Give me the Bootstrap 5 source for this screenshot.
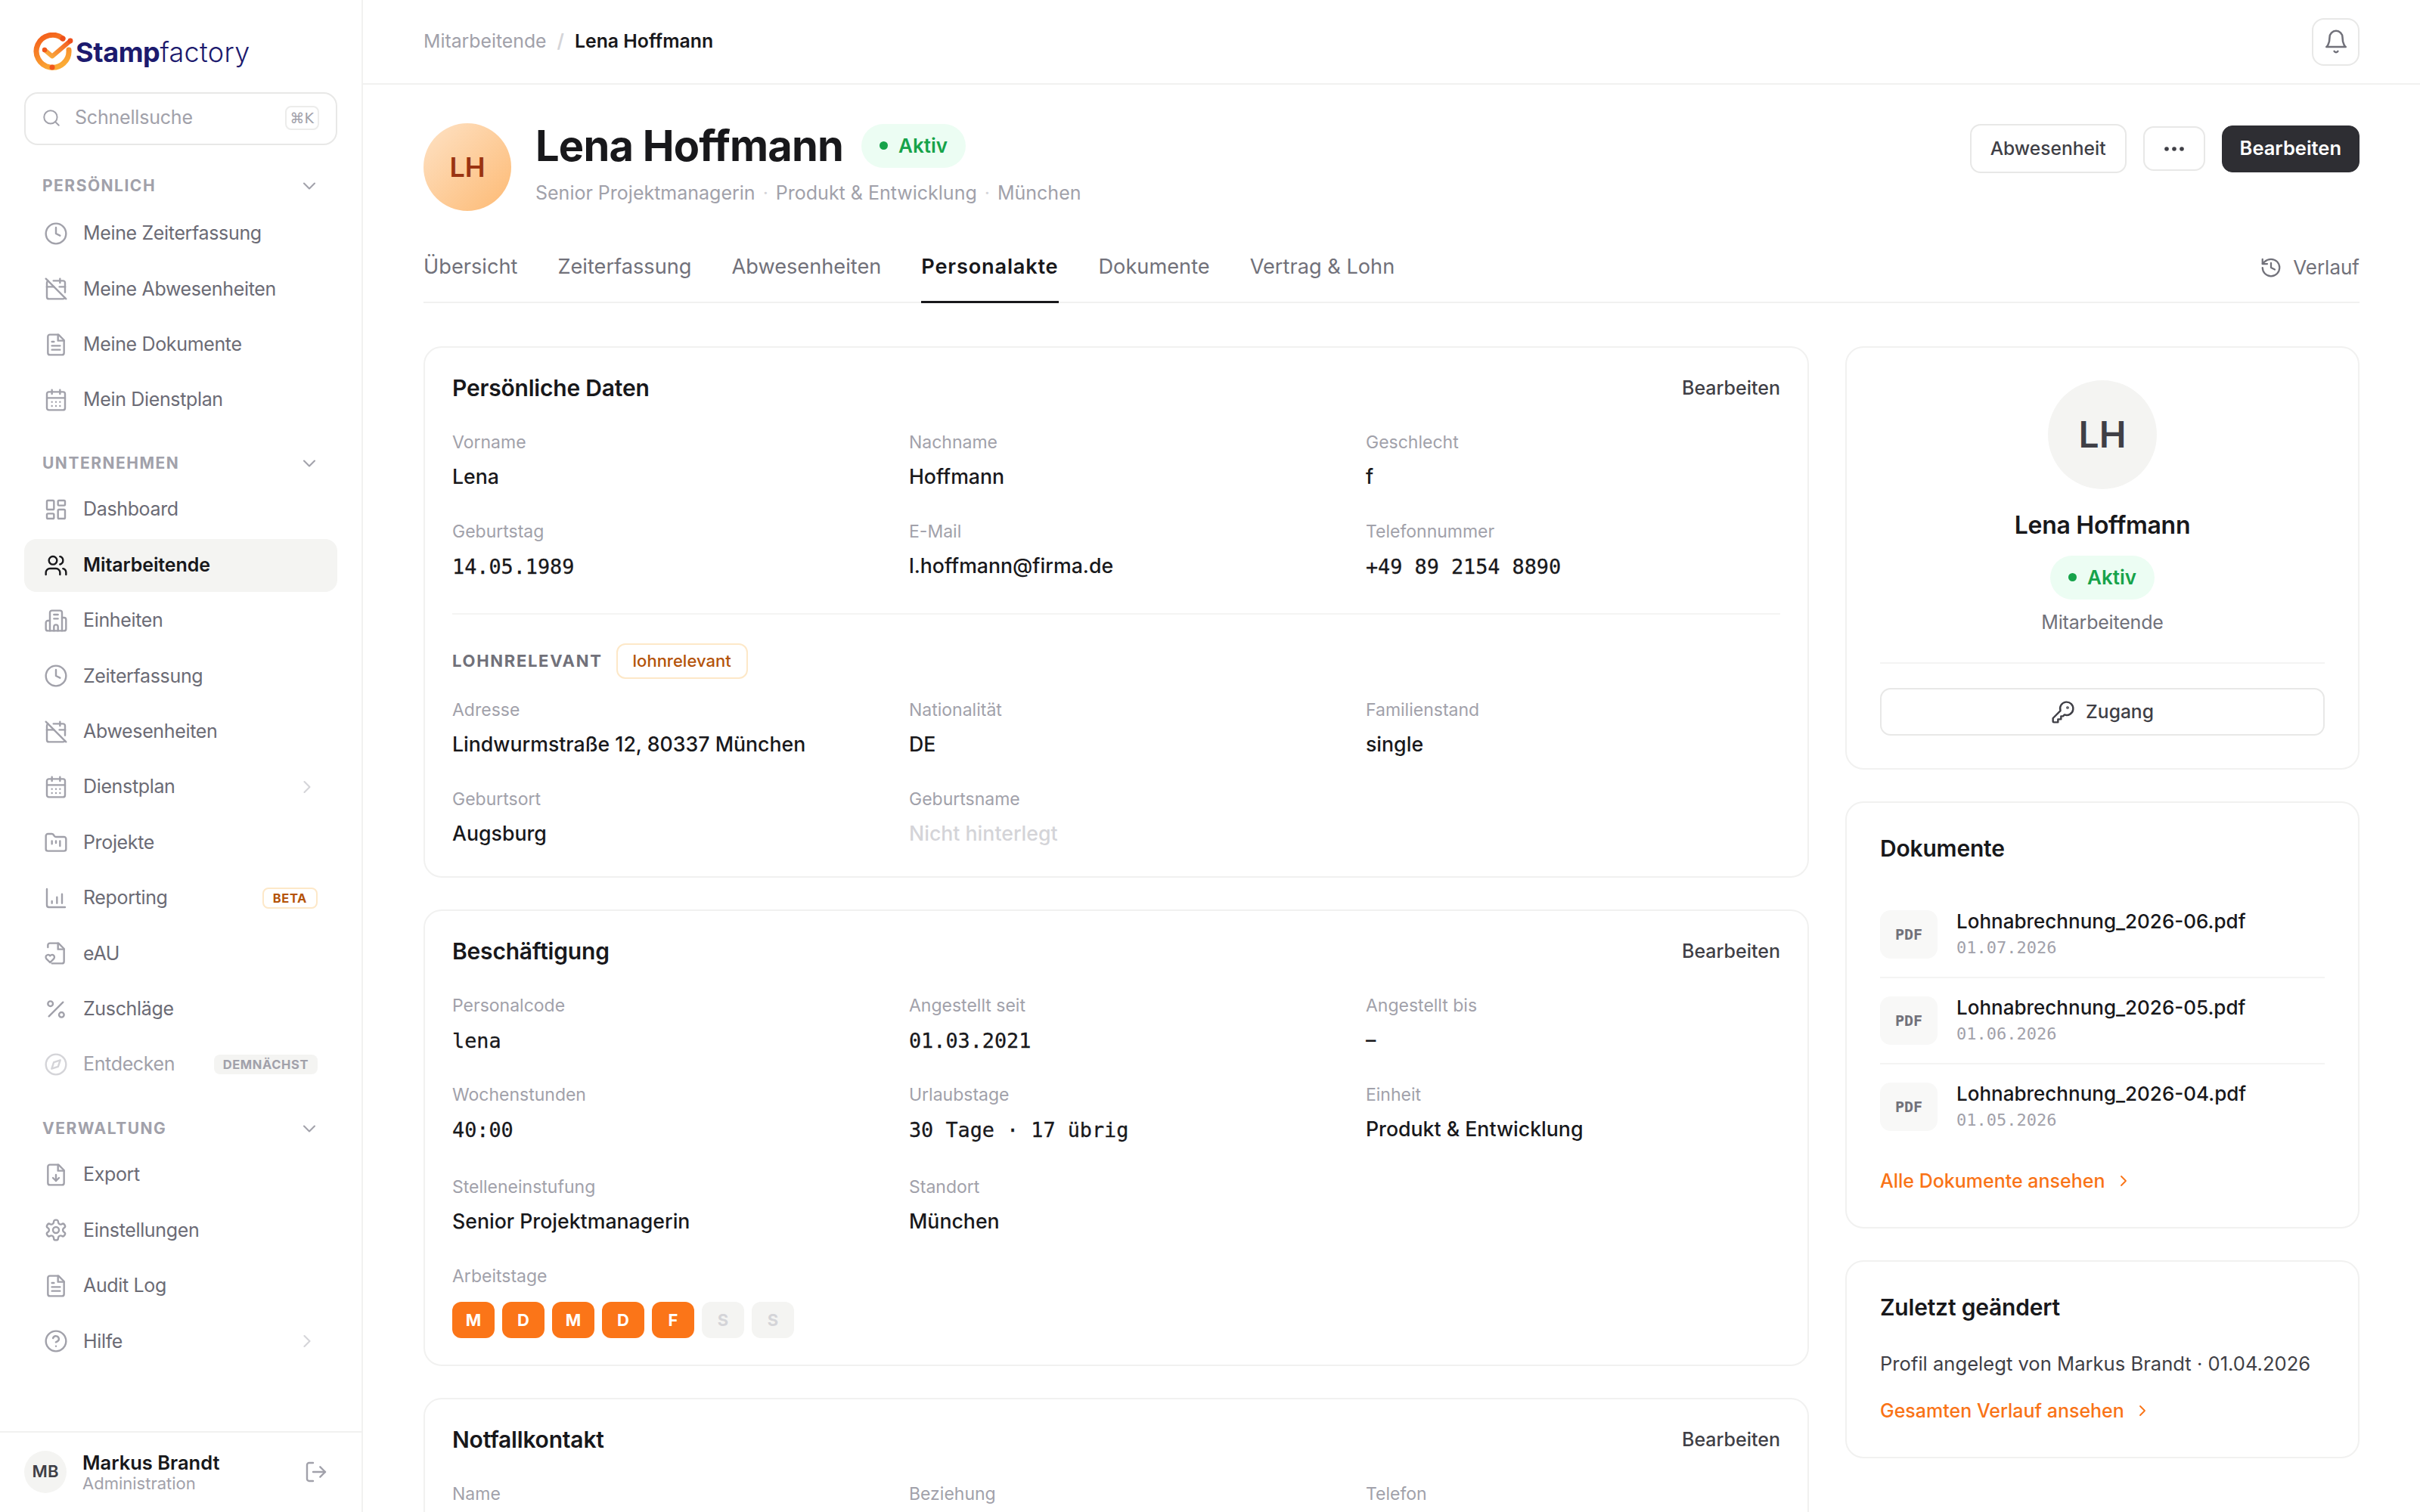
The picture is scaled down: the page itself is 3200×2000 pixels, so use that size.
<!DOCTYPE html>
<html lang="de">
<head>
    <meta charset="UTF-8">
    <meta name="viewport" content="width=device-width, initial-scale=1.0">
    <title>Lena Hoffmann - Personalakte</title>
    <link href="https://cdn.jsdelivr.net/npm/bootstrap@5.3.0/dist/css/bootstrap.min.css" rel="stylesheet">
    <style>
        html, body { height: 100%; }
        body {
            background: #fff;
            color: #18181b;
            font-family: Inter, "Liberation Sans", sans-serif;
            font-size: 26px;
            overflow: hidden;
        }
        .ico { fill: none; stroke: currentColor; stroke-width: 1.8; stroke-linecap: round; stroke-linejoin: round; flex-shrink: 0; }
        .shell { height: 2000px; }

        /* sidebar */
        .side-panel { width: 480px; flex-shrink: 0; border-right: 2px solid #f1f1f0; }
        .side-scroll { padding: 44px 32px 0; }
        .brand-row { height: 50px; margin: 0 0 28px 12px; gap: 2px; }
        .brand-name { font-size: 36px; line-height: 50px; color: #1c1a6e; font-weight: 300; letter-spacing: .3px; }
        .brand-name b { font-weight: 700; letter-spacing: -.4px; }
        .quick-search { height: 70px; border: 2px solid #e8e8e7; border-radius: 18px; padding: 0 22px 2px 21px; color: #a1a1aa; gap: 18px; font-size: 25px; letter-spacing: -.2px; }
        .quick-search kbd { background: none; border: 2px solid #ececeb; border-radius: 8px; color: #a1a1aa; font: 19px/28px "DejaVu Sans", sans-serif; padding: 0 5px; box-shadow: none; letter-spacing: 0; }
        .side-head { height: 32px; margin: 33px 0 10px; padding: 0 27px 0 24px; color: #a1a1aa; font-size: 21px; font-weight: 700; letter-spacing: 1.5px; }
        .side-head.first-head { margin: 38px 0 12px; }
        .side-head.last-head { margin-top: 34px; }
        .side-head .ico { margin-right: -4px; }
        .side-nav { gap: 3.4px; }
        .side-link { height: 70px; padding: 0 26px; gap: 20px; border-radius: 16px; color: #6b6b75; font-size: 25px; font-weight: 400; letter-spacing: -.35px; }
        .side-link:hover { color: #6b6b75; }
        .side-link .ico { color: #a1a1aa; }
        .side-link.on { background: #f4f4f2; color: #18181b; font-weight: 600; letter-spacing: -.1px; }
        .side-link.on .ico { color: #18181b; }
        .side-link.off { color: #a1a1aa; }
        .side-link.off .ico { color: #d4d4d8; }
        .side-link .tail { color: #d4d4d8; }
        .tag-beta { border: 2px solid #fde8c8; border-radius: 8px; color: #b45309; background: #fff; font-size: 16.5px; font-weight: 700; letter-spacing: .6px; line-height: 24px; padding: 0 12px; }
        .tag-soon { border-radius: 8px; background: #f4f4f2; color: #a1a1aa; font-size: 16.5px; font-weight: 700; letter-spacing: .6px; line-height: 26px; padding: 0 12px; }
        .side-foot { height: 107px; border-top: 2px solid #f1f1f0; padding: 0 44px 2px 32px; gap: 21px; }
        .foot-avatar { width: 56px; height: 56px; background: #f4f4f2; font-size: 22px; font-weight: 600; color: #3f3f46; }
        .foot-name { font-size: 25.5px; line-height: 30px; font-weight: 600; }
        .foot-role { font-size: 22px; line-height: 24px; color: #a1a1aa; }
        .foot-exit { color: #a1a1aa; }

        /* top bar */
        .top-bar { height: 112px; flex-shrink: 0; border-bottom: 2px solid #f1f1f0; padding: 0 80px; }
        .crumbs { margin: 0; font-size: 24.8px; --bs-breadcrumb-divider-color: #d4d4d8; --bs-breadcrumb-item-padding-x: 14px; }
        .crumbs .breadcrumb-item { color: #a1a1aa; }
        .crumbs .breadcrumb-item.active { color: #18181b; font-weight: 600; }
        .square-btn { width: 63px; height: 63px; padding: 0; border: 2px solid #e8e8e7; border-radius: 16px; color: #71717a; }

        .page-wrap { padding: 51px 80px 0; }
        .head-left { gap: 32px; }
        .head-avatar { width: 116px; height: 116px; background: linear-gradient(135deg, #fee2c5, #fdba74); color: #9a3412; font-size: 36px; font-weight: 600; }
        .head-name { font-size: 56px; line-height: 60px; font-weight: 700; letter-spacing: -.8px; margin: 0; }
        .state-pill { background: #ecfdf3; color: #16a34a; height: 58px; padding: 0 24px 2px; gap: 14px; font-size: 26px; font-weight: 600; border-radius: 29px; }
        .state-pill i { width: 11px; height: 11px; border-radius: 50%; background: #16a34a; display: block; }
        .head-sub { color: #a1a1aa; font-size: 25px; line-height: 36px; margin-top: 14px; }
        .head-sub span { margin: 0 10px; color: #d4d4d8; }
        .head-actions { gap: 22px; margin-top: 1px; }
        .ghost-btn { border: 2px solid #e8e8e7; color: #3f3f46; border-radius: 14px; font-size: 24.6px; font-weight: 500; background: #fff; height: 65px; padding: 0 25px; }
        .more-btn { width: 82px; height: 59px; padding: 0; }
        .dark-btn { --bs-btn-color: #fff; --bs-btn-bg: #2e2e33; --bs-btn-border-color: #2e2e33; height: 62px; padding: 0 23px; border-radius: 14px; font-size: 25.5px; font-weight: 600; }

        .tab-bar { margin-top: 56px; border-bottom: 2px solid #f1f1f0; gap: 53px; }
        .tab-item { padding: 0 0 27px; line-height: 36px; font-size: 27.2px; color: #71717a; border-bottom: 3px solid transparent; margin-bottom: -2px; }
        .tab-item.on { color: #18181b; font-weight: 600; border-bottom-color: #18181b; letter-spacing: .8px; }
        .tab-extra { color: #71717a; gap: 14px; font-size: 26px; line-height: 36px; padding-bottom: 27px; }

        /* content */
        .col-stage { margin-top: 57px; gap: 48px; }
        .col-left { width: 1832px; gap: 42px; flex-shrink: 0; }
        .col-right { width: 680px; gap: 42px; flex-shrink: 0; }
        .sheet { --bs-card-border-color: #f1f1f0; --bs-card-border-width: 2px; --bs-card-border-radius: 24px; --bs-card-inner-border-radius: 22px; }
        .sheet .card-body { padding: 33px 36px 37px; }
        .sheet .tight-body { padding-bottom: 35px; }
        .sheet-title { font-size: 30px; line-height: 40px; font-weight: 600; margin: 0; letter-spacing: -.2px; }
        .edit-link { font-size: 25px; font-weight: 500; color: #3f3f46; padding-top: 2px; }
        .field-row { --bs-gutter-x: 56px; --bs-gutter-y: 0; row-gap: 37px; }
        .sheet-head { margin-bottom: 36px; }
        .fld-label { font-size: 23px; line-height: 32px; color: #a1a1aa; }
        .fld-value { font-size: 26.7px; line-height: 40px; margin-top: 9px; font-weight: 500; }
        .fld-value.mono { font-family: "DejaVu Sans Mono", "Liberation Mono", monospace; font-size: 26.8px; font-weight: 400; line-height: 44px; margin-bottom: -4px; -webkit-text-stroke: .3px; }
        .fld-value.empty { color: #d4d4d8; }
        .tall-row { padding-bottom: 4px; }
        .rule-line { border-top: 2px solid #f4f4f3; margin: 43px 0 38px; }
        .sub-head { height: 47px; gap: 18px; margin-bottom: 25px; }
        .sub-title { font-size: 22px; font-weight: 700; letter-spacing: 1.7px; color: #71717a; }
        .pay-tag { border: 2px solid #fde8c8; border-radius: 12px; color: #b45309; background: #fff; font-size: 22px; font-weight: 500; line-height: 43px; padding: 0 20px; }
        .day-chips { gap: 10px; margin-top: 18px; }
        .day-chip { width: 56px; height: 48px; border-radius: 12px; background: #fb7518; color: #fff; font-size: 22px; font-weight: 700; }
        .day-chip.rest { background: #f4f4f2; color: #d4d4d8; }
        .cut-card { min-height: 300px; }

        .right-card .card-body { padding: 40px 44px 43px; }
        .right-card .profile-body { padding-top: 43px; }
        .big-avatar { width: 144px; height: 144px; background: #f4f4f2; color: #3f3f46; font-size: 48px; font-weight: 600; }
        .card-name { font-size: 32px; line-height: 44px; font-weight: 600; margin: 26px 0 18px; letter-spacing: -.3px; }
        .card-role { color: #71717a; font-size: 25px; line-height: 36px; margin-top: 12px; letter-spacing: -.2px; }
        .card-rule { border-top: 2px solid #f4f4f3; width: 100%; margin: 35px 0 32px; }
        .access-btn { width: 100%; height: 63px; gap: 14px; padding: 0; }
        .doc-list { margin-top: 38px; }
        .doc-row { padding: 23px 0; gap: 25px; border-bottom: 2px solid #f4f4f3; }
        .doc-row:last-child { border-bottom: 0; }
        .doc-tile { width: 76px; height: 64px; border-radius: 14px; background: #f8f8f7; color: #71717a; font: 700 20px "DejaVu Sans Mono", monospace; flex-shrink: 0; }
        .doc-name { font-size: 26px; line-height: 32px; font-weight: 500; }
        .doc-date { font: 22px/30px "DejaVu Sans Mono", "Liberation Mono", monospace; color: #a1a1aa; margin-top: 4px; }
        .more-link { color: #f97316; font-size: 25px; font-weight: 500; gap: 12px; line-height: 36px; }
        .more-link:hover { color: #f97316; }
        .doc-more { margin-top: 24px; }
        .note-text { color: #3f3f46; font-size: 25.6px; line-height: 36px; margin: 37px 0 26px; }
    </style>
</head>
<body>
    <svg width="0" height="0" class="position-absolute">
        <defs>
            <linearGradient id="ringGrad" x1="0.2" y1="0" x2="0.6" y2="1"><stop offset="0" stop-color="#f4611c"/><stop offset="1" stop-color="#fbab35"/></linearGradient>
            <linearGradient id="tickGrad" x1="0" y1="1" x2="1" y2="0"><stop offset="0" stop-color="#fbb040"/><stop offset="1" stop-color="#f2591d"/></linearGradient>
        </defs>
        <symbol id="i-clock" viewBox="0 0 24 24"><circle cx="12" cy="12" r="10"/><path d="M12 6v6l4 2"/></symbol>
        <symbol id="i-caloff" viewBox="0 0 24 24"><path d="M4.2 4.2A2 2 0 0 0 3 6v14a2 2 0 0 0 2 2h14a2 2 0 0 0 1.82-1.18"/><path d="M21 15.5V6a2 2 0 0 0-2-2H9.5"/><path d="M16 2v4"/><path d="M3 10h7"/><path d="M21 10h-5.5"/><path d="m2 2 20 20"/></symbol>
        <symbol id="i-file" viewBox="0 0 24 24"><path d="M14.5 2H6a2 2 0 0 0-2 2v16a2 2 0 0 0 2 2h12a2 2 0 0 0 2-2V7.5L14.5 2z"/><path d="M14 2v6h6"/><path d="M16 13H8"/><path d="M16 17H8"/><path d="M10 9H8"/></symbol>
        <symbol id="i-cal" viewBox="0 0 24 24"><rect x="3" y="4" width="18" height="18" rx="2"/><path d="M16 2v4M8 2v4M3 10h18M8 14h.01M12 14h.01M16 14h.01M8 18h.01M12 18h.01M16 18h.01"/></symbol>
        <symbol id="i-dash" viewBox="0 0 24 24"><rect x="3" y="3" width="7" height="9" rx="1"/><rect x="14" y="3" width="7" height="5" rx="1"/><rect x="14" y="12" width="7" height="9" rx="1"/><rect x="3" y="16" width="7" height="5" rx="1"/></symbol>
        <symbol id="i-users" viewBox="0 0 24 24"><path d="M16 21v-2a4 4 0 0 0-4-4H6a4 4 0 0 0-4 4v2"/><circle cx="9" cy="7" r="4"/><path d="M22 21v-2a4 4 0 0 0-3-3.87"/><path d="M16 3.13a4 4 0 0 1 0 7.75"/></symbol>
        <symbol id="i-build" viewBox="0 0 24 24"><path d="M6 22V4a2 2 0 0 1 2-2h8a2 2 0 0 1 2 2v18Z"/><path d="M6 12H4a2 2 0 0 0-2 2v6a2 2 0 0 0 2 2h2"/><path d="M18 9h2a2 2 0 0 1 2 2v9a2 2 0 0 1-2 2h-2"/><path d="M10 6h4M10 10h4"/><path d="M10 22v-4a2 2 0 0 1 4 0v4"/></symbol>
        <symbol id="i-folder" viewBox="0 0 24 24"><path d="M4 20h16a2 2 0 0 0 2-2V8a2 2 0 0 0-2-2h-7.93a2 2 0 0 1-1.66-.9l-.82-1.2A2 2 0 0 0 7.93 3H4a2 2 0 0 0-2 2v13c0 1.1.9 2 2 2Z"/><path d="M8 10v3M12 10v2M16 10v5"/></symbol>
        <symbol id="i-chart" viewBox="0 0 24 24"><path d="M3 3v16a2 2 0 0 0 2 2h16"/><path d="M8 17v-2M13 17v-6M18 17V8"/></symbol>
        <symbol id="i-heart" viewBox="0 0 24 24"><path d="M4 6V4a2 2 0 0 1 2-2h8.5L20 7.5V20a2 2 0 0 1-2 2H8"/><path d="M14 2v6h6"/><path d="M10.29 10.7a2.43 2.43 0 0 0-2.66-.52c-.29.12-.56.3-.78.53l-.35.34-.35-.34a2.43 2.43 0 0 0-2.65-.53c-.3.12-.56.3-.79.53-.95.94-1 2.53.2 3.74L6.5 18l3.6-3.55c1.2-1.21 1.14-2.8.19-3.74Z" transform="translate(0 4) scale(.95)"/></symbol>
        <symbol id="i-pct" viewBox="0 0 24 24"><path d="M19 5 5 19"/><circle cx="6.5" cy="6.5" r="2.5"/><circle cx="17.5" cy="17.5" r="2.5"/></symbol>
        <symbol id="i-compass" viewBox="0 0 24 24"><circle cx="12" cy="12" r="10"/><path d="m16.24 7.76-2.12 6.36-6.36 2.12 2.12-6.36 6.36-2.12z"/></symbol>
        <symbol id="i-filedown" viewBox="0 0 24 24"><path d="M14.5 2H6a2 2 0 0 0-2 2v16a2 2 0 0 0 2 2h12a2 2 0 0 0 2-2V7.5L14.5 2z"/><path d="M14 2v6h6"/><path d="M12 18v-6"/><path d="m9 15 3 3 3-3"/></symbol>
        <symbol id="i-gear" viewBox="0 0 24 24"><path d="M12.22 2h-.44a2 2 0 0 0-2 2v.18a2 2 0 0 1-1 1.73l-.43.25a2 2 0 0 1-2 0l-.15-.08a2 2 0 0 0-2.73.73l-.22.38a2 2 0 0 0 .73 2.73l.15.1a2 2 0 0 1 1 1.72v.51a2 2 0 0 1-1 1.74l-.15.09a2 2 0 0 0-.73 2.73l.22.38a2 2 0 0 0 2.73.73l.15-.08a2 2 0 0 1 2 0l.43.25a2 2 0 0 1 1 1.73V20a2 2 0 0 0 2 2h.44a2 2 0 0 0 2-2v-.18a2 2 0 0 1 1-1.73l.43-.25a2 2 0 0 1 2 0l.15.08a2 2 0 0 0 2.73-.73l.22-.39a2 2 0 0 0-.73-2.73l-.15-.08a2 2 0 0 1-1-1.74v-.5a2 2 0 0 1 1-1.74l.15-.09a2 2 0 0 0 .73-2.73l-.22-.38a2 2 0 0 0-2.73-.73l-.15.08a2 2 0 0 1-2 0l-.43-.25a2 2 0 0 1-1-1.73V4a2 2 0 0 0-2-2z"/><circle cx="12" cy="12" r="3"/></symbol>
        <symbol id="i-help" viewBox="0 0 24 24"><circle cx="12" cy="12" r="10"/><path d="M9.09 9a3 3 0 0 1 5.83 1c0 2-3 3-3 3"/><path d="M12 17h.01"/></symbol>
        <symbol id="i-logout" viewBox="0 0 24 24"><path d="M9 21H5a2 2 0 0 1-2-2V5a2 2 0 0 1 2-2h4"/><path d="m16 17 5-5-5-5"/><path d="M21 12H9"/></symbol>
        <symbol id="i-search" viewBox="0 0 24 24"><circle cx="11" cy="11" r="8"/><path d="m21 21-4.3-4.3"/></symbol>
        <symbol id="i-down" viewBox="0 0 24 24"><path d="m6 9 6 6 6-6"/></symbol>
        <symbol id="i-right" viewBox="0 0 24 24"><path d="m9 18 6-6-6-6"/></symbol>
        <symbol id="i-bell" viewBox="0 0 24 24"><path d="M6 8a6 6 0 0 1 12 0c0 7 3 9 3 9H3s3-2 3-9"/><path d="M10.3 21a1.94 1.94 0 0 0 3.4 0"/></symbol>
        <symbol id="i-history" viewBox="0 0 24 24"><path d="M3 12a9 9 0 1 0 9-9 9.75 9.75 0 0 0-6.74 2.74L3 8"/><path d="M3 3v5h5"/><path d="M12 7v5l4 2"/></symbol>
        <symbol id="i-key" viewBox="0 0 24 24"><path d="M2 18v3c0 .6.4 1 1 1h4v-3h3v-3h2l1.4-1.4a6.5 6.5 0 1 0-4-4Z"/><circle cx="16.5" cy="7.5" r=".5"/></symbol>
    </svg>

    <div class="shell d-flex">
        <!-- Sidebar -->
        <aside class="side-panel d-flex flex-column">
            <div class="side-scroll flex-grow-1">
                <div class="brand-row d-flex align-items-center">
                    <svg width="54" height="52" viewBox="0 0 54 52" fill="none">
                        <path d="M39 8A21.5 21.5 0 1 0 47 23" stroke="url(#ringGrad)" stroke-width="7" stroke-linecap="round"/>
                        <path d="M15 23l10 8.5L49 11" stroke="url(#tickGrad)" stroke-width="6" stroke-linecap="round" stroke-linejoin="round"/>
                        <circle cx="39" cy="8" r="3.5" fill="#ee4f1b"/><circle cx="25" cy="46" r="3.5" fill="#f0571c"/>
                        <circle cx="15" cy="23" r="3.2" fill="#f0571c"/><circle cx="49" cy="11" r="3.4" fill="#ee4f1b"/>
                    </svg>
                    <span class="brand-name"><b>Stamp</b>factory</span>
                </div>
                <div class="quick-search d-flex align-items-center">
                    <svg class="ico" width="26" height="26"><use href="#i-search"/></svg>
                    <span class="flex-grow-1">Schnellsuche</span>
                    <kbd>⌘K</kbd>
                </div>

                <div class="side-head first-head d-flex align-items-center justify-content-between">PERSÖNLICH<svg class="ico" width="28" height="28"><use href="#i-down"/></svg></div>
                <nav class="nav flex-column side-nav">
                    <a class="nav-link side-link d-flex align-items-center" href="#"><svg class="ico" width="32" height="32"><use href="#i-clock"/></svg>Meine Zeiterfassung</a>
                    <a class="nav-link side-link d-flex align-items-center" href="#"><svg class="ico" width="32" height="32"><use href="#i-caloff"/></svg>Meine Abwesenheiten</a>
                    <a class="nav-link side-link d-flex align-items-center" href="#"><svg class="ico" width="32" height="32"><use href="#i-file"/></svg>Meine Dokumente</a>
                    <a class="nav-link side-link d-flex align-items-center" href="#"><svg class="ico" width="32" height="32"><use href="#i-cal"/></svg>Mein Dienstplan</a>
                </nav>

                <div class="side-head d-flex align-items-center justify-content-between">UNTERNEHMEN<svg class="ico" width="28" height="28"><use href="#i-down"/></svg></div>
                <nav class="nav flex-column side-nav">
                    <a class="nav-link side-link d-flex align-items-center" href="#"><svg class="ico" width="32" height="32"><use href="#i-dash"/></svg>Dashboard</a>
                    <a class="nav-link side-link on d-flex align-items-center" href="#"><svg class="ico" width="32" height="32"><use href="#i-users"/></svg>Mitarbeitende</a>
                    <a class="nav-link side-link d-flex align-items-center" href="#"><svg class="ico" width="32" height="32"><use href="#i-build"/></svg>Einheiten</a>
                    <a class="nav-link side-link d-flex align-items-center" href="#"><svg class="ico" width="32" height="32"><use href="#i-clock"/></svg>Zeiterfassung</a>
                    <a class="nav-link side-link d-flex align-items-center" href="#"><svg class="ico" width="32" height="32"><use href="#i-caloff"/></svg>Abwesenheiten</a>
                    <a class="nav-link side-link d-flex align-items-center" href="#"><svg class="ico" width="32" height="32"><use href="#i-cal"/></svg>Dienstplan<svg class="ico tail ms-auto" width="28" height="28"><use href="#i-right"/></svg></a>
                    <a class="nav-link side-link d-flex align-items-center" href="#"><svg class="ico" width="32" height="32"><use href="#i-folder"/></svg>Projekte</a>
                    <a class="nav-link side-link d-flex align-items-center" href="#"><svg class="ico" width="32" height="32"><use href="#i-chart"/></svg>Reporting<span class="tag-beta ms-auto">BETA</span></a>
                    <a class="nav-link side-link d-flex align-items-center" href="#"><svg class="ico" width="32" height="32"><use href="#i-heart"/></svg>eAU</a>
                    <a class="nav-link side-link d-flex align-items-center" href="#"><svg class="ico" width="32" height="32"><use href="#i-pct"/></svg>Zuschläge</a>
                    <a class="nav-link side-link off d-flex align-items-center" href="#"><svg class="ico" width="32" height="32"><use href="#i-compass"/></svg>Entdecken<span class="tag-soon ms-auto">DEMNÄCHST</span></a>
                </nav>

                <div class="side-head last-head d-flex align-items-center justify-content-between">VERWALTUNG<svg class="ico" width="28" height="28"><use href="#i-down"/></svg></div>
                <nav class="nav flex-column side-nav">
                    <a class="nav-link side-link d-flex align-items-center" href="#"><svg class="ico" width="32" height="32"><use href="#i-filedown"/></svg>Export</a>
                    <a class="nav-link side-link d-flex align-items-center" href="#"><svg class="ico" width="32" height="32"><use href="#i-gear"/></svg>Einstellungen</a>
                    <a class="nav-link side-link d-flex align-items-center" href="#"><svg class="ico" width="32" height="32"><use href="#i-file"/></svg>Audit Log</a>
                    <a class="nav-link side-link d-flex align-items-center" href="#"><svg class="ico" width="32" height="32"><use href="#i-help"/></svg>Hilfe<svg class="ico tail ms-auto" width="28" height="28"><use href="#i-right"/></svg></a>
                </nav>
            </div>
            <div class="side-foot d-flex align-items-center">
                <div class="foot-avatar rounded-circle d-flex align-items-center justify-content-center">MB</div>
                <div class="flex-grow-1">
                    <div class="foot-name">Markus Brandt</div>
                    <div class="foot-role">Administration</div>
                </div>
                <svg class="ico foot-exit" width="32" height="32"><use href="#i-logout"/></svg>
            </div>
        </aside>

        <!-- Main -->
        <main class="flex-grow-1 d-flex flex-column overflow-hidden">
            <header class="top-bar d-flex align-items-center justify-content-between">
                <nav aria-label="breadcrumb">
                    <ol class="breadcrumb crumbs">
                        <li class="breadcrumb-item">Mitarbeitende</li>
                        <li class="breadcrumb-item active">Lena Hoffmann</li>
                    </ol>
                </nav>
                <button class="btn square-btn d-flex align-items-center justify-content-center"><svg class="ico" width="34" height="34"><use href="#i-bell"/></svg></button>
            </header>

            <div class="page-wrap">
                <div class="d-flex justify-content-between align-items-start">
                    <div class="head-left d-flex align-items-start">
                        <div class="head-avatar rounded-circle d-flex align-items-center justify-content-center">LH</div>
                        <div>
                            <div class="d-flex align-items-center gap-4">
                                <h1 class="head-name">Lena Hoffmann</h1>
                                <div class="state-pill d-flex align-items-center"><i></i>Aktiv</div>
                            </div>
                            <div class="head-sub">Senior Projektmanagerin<span>·</span>Produkt &amp; Entwicklung<span>·</span>München</div>
                        </div>
                    </div>
                    <div class="head-actions d-flex align-items-center">
                        <button class="btn ghost-btn">Abwesenheit</button>
                        <button class="btn ghost-btn more-btn d-flex align-items-center justify-content-center" aria-label="Mehr">
                            <svg width="28" height="8" viewBox="0 0 28 8" fill="#3f3f46"><circle cx="4" cy="4" r="2.8"/><circle cx="14" cy="4" r="2.8"/><circle cx="24" cy="4" r="2.8"/></svg>
                        </button>
                        <button class="btn dark-btn">Bearbeiten</button>
                    </div>
                </div>

                <div class="tab-bar nav">
                    <a class="tab-item text-decoration-none" href="#">Übersicht</a>
                    <a class="tab-item text-decoration-none" href="#">Zeiterfassung</a>
                    <a class="tab-item text-decoration-none" href="#">Abwesenheiten</a>
                    <a class="tab-item on text-decoration-none" href="#">Personalakte</a>
                    <a class="tab-item text-decoration-none" href="#">Dokumente</a>
                    <a class="tab-item text-decoration-none" href="#">Vertrag &amp; Lohn</a>
                    <div class="tab-extra ms-auto d-flex align-items-center"><svg class="ico" width="30" height="30"><use href="#i-history"/></svg>Verlauf</div>
                </div>

                <div class="col-stage d-flex align-items-start">
                    <div class="col-left d-flex flex-column">
                        <section class="card sheet">
                            <div class="card-body">
                                <div class="sheet-head d-flex justify-content-between align-items-center">
                                    <h2 class="sheet-title">Persönliche Daten</h2><span class="edit-link">Bearbeiten</span>
                                </div>
                                <div class="row field-row">
                                    <div class="col-4"><div class="fld-label">Vorname</div><div class="fld-value">Lena</div></div>
                                    <div class="col-4"><div class="fld-label">Nachname</div><div class="fld-value">Hoffmann</div></div>
                                    <div class="col-4"><div class="fld-label">Geschlecht</div><div class="fld-value">f</div></div>
                                    <div class="col-4"><div class="fld-label">Geburtstag</div><div class="fld-value mono">14.05.1989</div></div>
                                    <div class="col-4"><div class="fld-label">E-Mail</div><div class="fld-value">l.hoffmann@firma.de</div></div>
                                    <div class="col-4"><div class="fld-label">Telefonnummer</div><div class="fld-value mono">+49 89 2154 8890</div></div>
                                </div>
                                <div class="rule-line"></div>
                                <div class="sub-head d-flex align-items-center">
                                    <span class="sub-title">LOHNRELEVANT</span><span class="pay-tag">lohnrelevant</span>
                                </div>
                                <div class="row field-row">
                                    <div class="col-4"><div class="fld-label">Adresse</div><div class="fld-value">Lindwurmstraße 12, 80337 München</div></div>
                                    <div class="col-4"><div class="fld-label">Nationalität</div><div class="fld-value">DE</div></div>
                                    <div class="col-4"><div class="fld-label">Familienstand</div><div class="fld-value">single</div></div>
                                    <div class="col-4"><div class="fld-label">Geburtsort</div><div class="fld-value">Augsburg</div></div>
                                    <div class="col-4"><div class="fld-label">Geburtsname</div><div class="fld-value empty">Nicht hinterlegt</div></div>
                                </div>
                            </div>
                        </section>

                        <section class="card sheet">
                            <div class="card-body tight-body">
                                <div class="sheet-head d-flex justify-content-between align-items-center">
                                    <h2 class="sheet-title">Beschäftigung</h2><span class="edit-link">Bearbeiten</span>
                                </div>
                                <div class="row field-row">
                                    <div class="col-4"><div class="fld-label">Personalcode</div><div class="fld-value mono">lena</div></div>
                                    <div class="col-4"><div class="fld-label">Angestellt seit</div><div class="fld-value mono">01.03.2021</div></div>
                                    <div class="col-4"><div class="fld-label">Angestellt bis</div><div class="fld-value">–</div></div>
                                    <div class="col-4 tall-row"><div class="fld-label">Wochenstunden</div><div class="fld-value mono">40:00</div></div>
                                    <div class="col-4"><div class="fld-label">Urlaubstage</div><div class="fld-value mono">30 Tage · 17 übrig</div></div>
                                    <div class="col-4"><div class="fld-label">Einheit</div><div class="fld-value">Produkt &amp; Entwicklung</div></div>
                                    <div class="col-4"><div class="fld-label">Stelleneinstufung</div><div class="fld-value">Senior Projektmanagerin</div></div>
                                    <div class="col-8"><div class="fld-label">Standort</div><div class="fld-value">München</div></div>
                                    <div class="col-12">
                                        <div class="fld-label">Arbeitstage</div>
                                        <div class="day-chips d-flex">
                                            <span class="day-chip d-flex align-items-center justify-content-center">M</span>
                                            <span class="day-chip d-flex align-items-center justify-content-center">D</span>
                                            <span class="day-chip d-flex align-items-center justify-content-center">M</span>
                                            <span class="day-chip d-flex align-items-center justify-content-center">D</span>
                                            <span class="day-chip d-flex align-items-center justify-content-center">F</span>
                                            <span class="day-chip rest d-flex align-items-center justify-content-center">S</span>
                                            <span class="day-chip rest d-flex align-items-center justify-content-center">S</span>
                                        </div>
                                    </div>
                                </div>
                            </div>
                        </section>

                        <section class="card sheet cut-card">
                            <div class="card-body">
                                <div class="sheet-head d-flex justify-content-between align-items-center">
                                    <h2 class="sheet-title">Notfallkontakt</h2><span class="edit-link">Bearbeiten</span>
                                </div>
                                <div class="row field-row">
                                    <div class="col-4"><div class="fld-label">Name</div></div>
                                    <div class="col-4"><div class="fld-label">Beziehung</div></div>
                                    <div class="col-4"><div class="fld-label">Telefon</div></div>
                                </div>
                            </div>
                        </section>
                    </div>

                    <div class="col-right d-flex flex-column">
                        <section class="card sheet right-card">
                            <div class="card-body profile-body d-flex flex-column align-items-center">
                                <div class="big-avatar rounded-circle d-flex align-items-center justify-content-center">LH</div>
                                <div class="card-name">Lena Hoffmann</div>
                                <div class="state-pill d-flex align-items-center"><i></i>Aktiv</div>
                                <div class="card-role">Mitarbeitende</div>
                                <div class="card-rule"></div>
                                <button class="btn ghost-btn access-btn d-flex align-items-center justify-content-center"><svg class="ico" width="32" height="32"><use href="#i-key"/></svg>Zugang</button>
                            </div>
                        </section>

                        <section class="card sheet right-card">
                            <div class="card-body">
                                <h2 class="sheet-title">Dokumente</h2>
                                <div class="doc-list">
                                    <div class="doc-row d-flex align-items-center">
                                        <div class="doc-tile d-flex align-items-center justify-content-center">PDF</div>
                                        <div><div class="doc-name">Lohnabrechnung_2026-06.pdf</div><div class="doc-date">01.07.2026</div></div>
                                    </div>
                                    <div class="doc-row d-flex align-items-center">
                                        <div class="doc-tile d-flex align-items-center justify-content-center">PDF</div>
                                        <div><div class="doc-name">Lohnabrechnung_2026-05.pdf</div><div class="doc-date">01.06.2026</div></div>
                                    </div>
                                    <div class="doc-row d-flex align-items-center">
                                        <div class="doc-tile d-flex align-items-center justify-content-center">PDF</div>
                                        <div><div class="doc-name">Lohnabrechnung_2026-04.pdf</div><div class="doc-date">01.05.2026</div></div>
                                    </div>
                                </div>
                                <a class="more-link doc-more d-flex align-items-center text-decoration-none" href="#">Alle Dokumente ansehen<svg class="ico" width="24" height="24"><use href="#i-right"/></svg></a>
                            </div>
                        </section>

                        <section class="card sheet right-card">
                            <div class="card-body">
                                <h2 class="sheet-title">Zuletzt geändert</h2>
                                <p class="note-text">Profil angelegt von Markus Brandt · 01.04.2026</p>
                                <a class="more-link d-flex align-items-center text-decoration-none" href="#">Gesamten Verlauf ansehen<svg class="ico" width="24" height="24"><use href="#i-right"/></svg></a>
                            </div>
                        </section>
                    </div>
                </div>
            </div>
        </main>
    </div>
    <script src="https://cdn.jsdelivr.net/npm/bootstrap@5.3.0/dist/js/bootstrap.bundle.min.js"></script>
</body>
</html>
